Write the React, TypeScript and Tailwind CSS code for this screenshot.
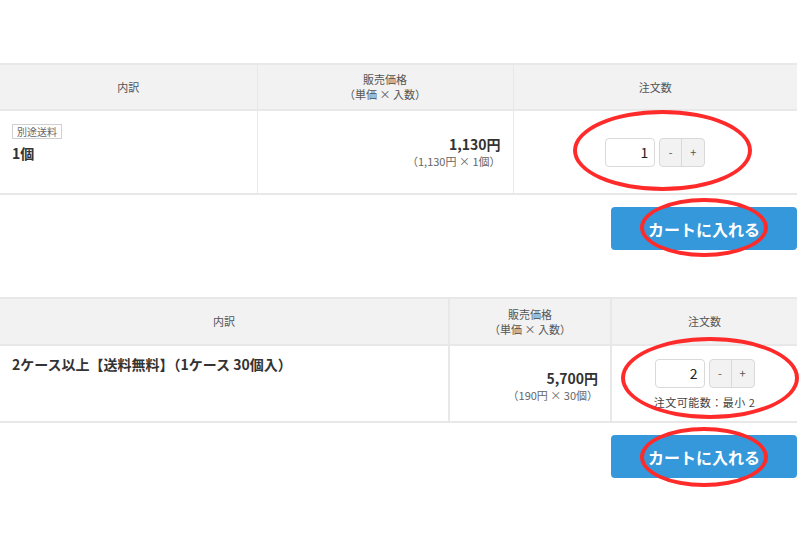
import React from "react";

const font = { fontFamily: '"Noto Sans CJK JP", "Noto Sans", sans-serif' };

function Qty({ value, note }: { value: number; note?: string }) {
  return (
    <div className="flex flex-col items-center">
      <div className="flex items-center gap-[4px]">
        <div className="w-[50px] h-[29px] border border-[#d9d9d9] rounded-[4px] bg-white flex items-center justify-end pr-[6px] text-[14px] text-[#222]">
          {value}
        </div>
        <div className="flex h-[29px] border border-[#d9d9d9] rounded-[4px] bg-[#f2f2f2] text-[11px] text-[#555]">
          <button className="w-[22px] border-r border-[#d9d9d9]">-</button>
          <button className="w-[22px]">+</button>
        </div>
      </div>
      {note && <div className="mt-[6px] text-[11px] text-[#444] tracking-[0.5px]">{note}</div>}
    </div>
  );
}

function CartButton() {
  return (
    <div className="flex justify-end w-[797px] mt-[12px]">
      <button className="w-[186px] h-[43px] rounded-[4px] bg-[#3498db] text-white text-[16px] font-bold">
        カートに入れる
      </button>
    </div>
  );
}

function Ellipse({ className }: { className: string }) {
  return <div className={`absolute border-[4px] border-[#ff2b2b] rounded-[50%] pointer-events-none ${className}`} />;
}

export default function App() {
  return (
    <div className="relative w-[800px] h-[550px] bg-white text-[#333]" style={font}>
      <div className="pt-[63px]">
        <table className="w-[797px] border-collapse table-fixed">
          <colgroup>
            <col className="w-[257px]" />
            <col className="w-[256px]" />
            <col />
          </colgroup>
          <thead>
            <tr className="bg-[#f2f2f2] h-[46px] text-[11px] text-[#555] font-normal">
              <th className="border-y-2 border-[#e8e8e8] font-normal">内訳</th>
              <th className="border-y-2 border-x border-[#e8e8e8] font-normal leading-[15px]">
                販売価格
                <br />（単価 × 入数）
              </th>
              <th className="border-y-2 border-[#e8e8e8] font-normal">注文数</th>
            </tr>
          </thead>
          <tbody>
            <tr className="h-[84px]">
              <td className="align-top px-[12px] pt-[6px] border-b-2 border-[#e8e8e8]">
                <span className="inline-block border border-[#d0d0d0] text-[10px] text-[#666] px-[4px] leading-[13px]">別途送料</span>
                <div className="text-[14px] font-bold leading-[20px] mt-[2px]">1個</div>
              </td>
              <td className="px-[12px] text-right border-x border-b-2 border-[#e8e8e8]">
                <div className="text-[14px] font-bold leading-[18px]">1,130円</div>
                <div className="text-[11px] text-[#666] leading-[16px]">（1,130円 × 1個）</div>
              </td>
              <td className="border-b-2 border-[#e8e8e8]">
                <Qty value={1} />
              </td>
            </tr>
          </tbody>
        </table>
        <CartButton />
      </div>

      <div className="pt-[47px]">
        <table className="w-[797px] border-collapse table-fixed">
          <colgroup>
            <col className="w-[449px]" />
            <col className="w-[162px]" />
            <col />
          </colgroup>
          <thead>
            <tr className="bg-[#f2f2f2] h-[47px] text-[11px] text-[#555]">
              <th className="border-y-2 border-[#e8e8e8] font-normal">内訳</th>
              <th className="border-y-2 border-x-2 border-[#e8e8e8] font-normal leading-[15px]">
                販売価格
                <br />（単価 × 入数）
              </th>
              <th className="border-y-2 border-[#e8e8e8] font-normal">注文数</th>
            </tr>
          </thead>
          <tbody>
            <tr className="h-[77px]">
              <td className="align-top px-[12px] pt-[8px] border-b-2 border-[#e8e8e8]">
                <div className="text-[14px] font-bold leading-[20px]">2ケース以上【送料無料】（1ケース 30個入）</div>
              </td>
              <td className="px-[12px] text-right border-x-2 border-b-2 border-[#e8e8e8]">
                <div className="text-[14px] font-bold leading-[18px] mt-[4px]">5,700円</div>
                <div className="text-[11px] text-[#666] leading-[16px]">（190円 × 30個）</div>
              </td>
              <td className="border-b-2 border-[#e8e8e8] pt-[2px]">
                <Qty value={2} note="注文可能数：最小 2" />
              </td>
            </tr>
          </tbody>
        </table>
        <CartButton />
      </div>

      <Ellipse className="left-[573px] top-[110px] w-[179px] h-[81px]" />
      <Ellipse className="left-[640px] top-[198px] w-[128px] h-[59px]" />
      <Ellipse className="left-[621px] top-[337px] w-[178px] h-[82px]" />
      <Ellipse className="left-[640px] top-[427px] w-[128px] h-[60px]" />
    </div>
  );
}
